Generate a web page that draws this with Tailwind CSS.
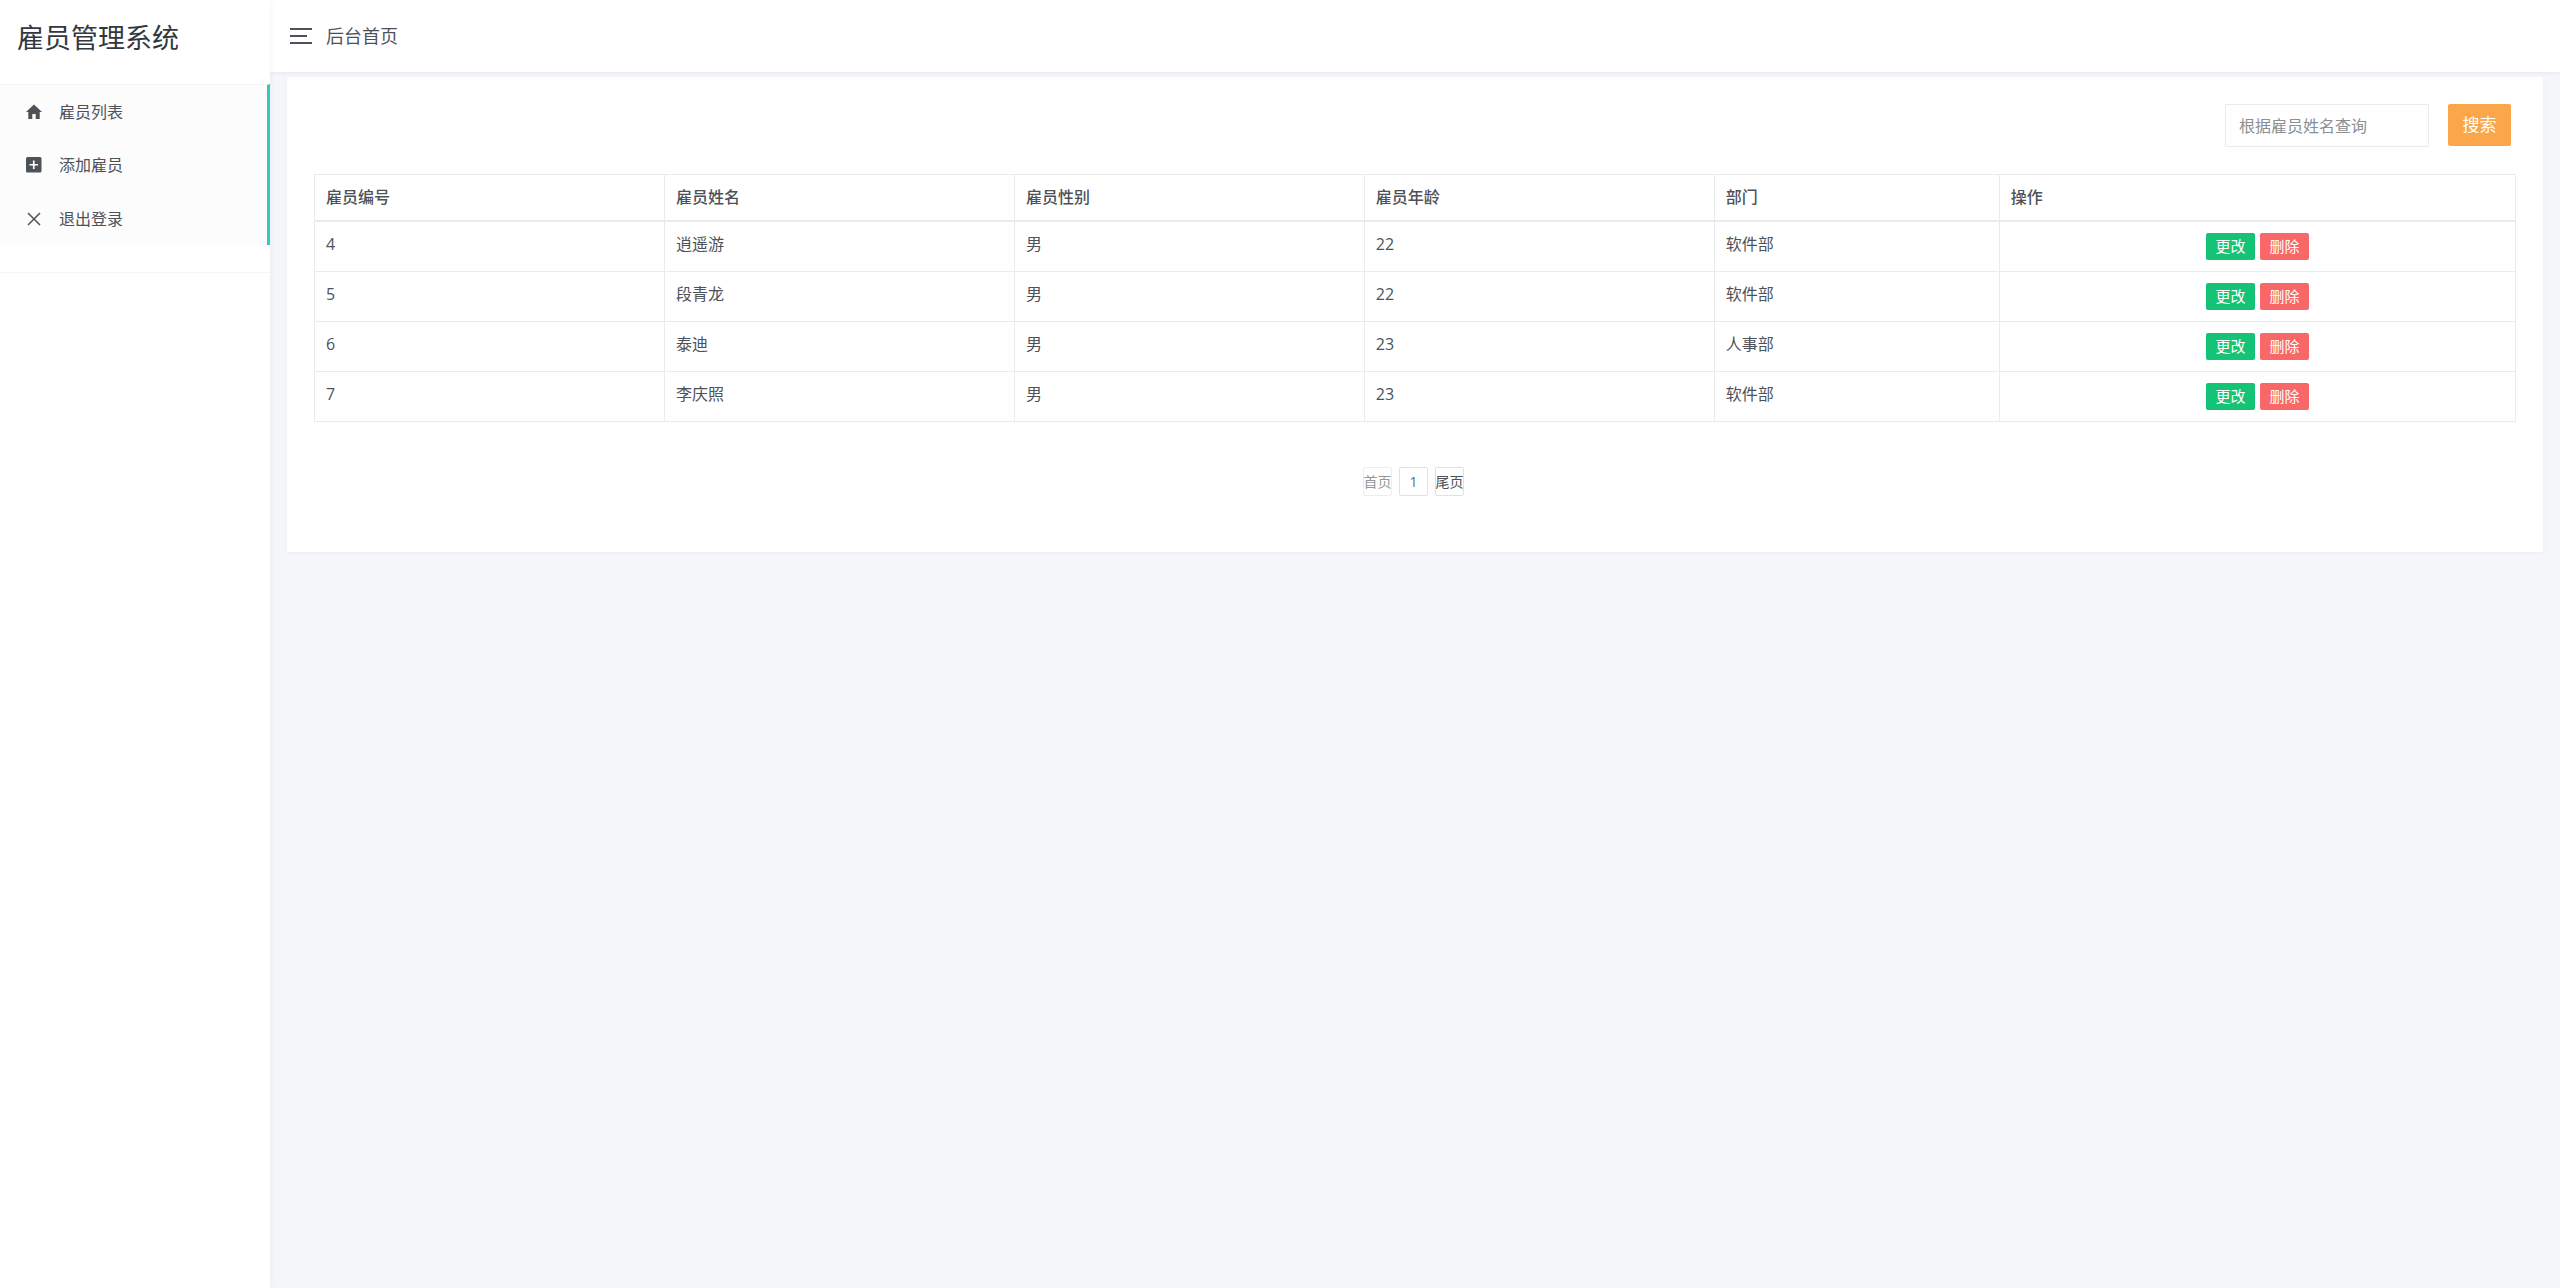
<!DOCTYPE html>
<html lang="zh-CN">
<head>
<meta charset="utf-8">
<title>雇员管理系统</title>
<script src="https://cdn.jsdelivr.net/npm/@tailwindcss/browser@4"></script>
</head>
<body class="flex min-h-screen bg-[#f5f6fa] font-['Open_Sans','Noto_Sans_CJK_SC',sans-serif] text-base font-normal text-[#4d5259]">
  <aside class="relative z-10 w-[270px] shrink-0 bg-white shadow-[0_0_6px_rgba(0,0,0,0.06)]">
    <h1 class="flex h-[84px] items-start px-[17px] pt-[18px] text-[27px] leading-10 font-normal text-[#33383e]">雇员管理系统</h1>
    <nav class="border-b border-[#f5f5f5] pb-[27px]">
      <ul class="border-t border-r-3 border-t-[#f5f5f5] border-r-[#33cabb] bg-[#fcfcfc] leading-[22px]">
        <li><a href="#" class="flex h-[53px] items-center gap-4 px-[25px]">
          <svg class="size-[18px]" viewBox="0 0 18 18" fill="currentColor" aria-hidden="true"><path d="M9 1.500 1 9h2.300v7H7.300v-5h3.400v5h4V9H17z"/></svg>
          雇员列表</a></li>
        <li><a href="#" class="flex h-[54px] items-center gap-4 px-[25px]">
          <svg class="size-[18px]" viewBox="0 0 18 18" aria-hidden="true"><rect x="1" y="1" width="15.500" height="15.500" rx="1.500" fill="currentColor"/><path d="M8.750 4.500v8.500M4.500 8.750H13" stroke="#fff" stroke-width="1.700"/></svg>
          添加雇员</a></li>
        <li><a href="#" class="flex h-[53px] items-center gap-4 px-[25px]">
          <svg class="size-[18px]" viewBox="0 0 18 18" fill="none" stroke="currentColor" stroke-width="1.500" aria-hidden="true"><path d="m3 3 12 12M15 3 3 15"/></svg>
          退出登录</a></li>
      </ul>
    </nav>
  </aside>

  <div class="min-w-0 flex-1">
    <header class="flex h-[72px] items-center gap-[14px] bg-white px-5 shadow-[0_1px_4px_rgba(0,0,0,0.06)]">
      <button type="button" aria-label="菜单" class="flex w-[22px] flex-col gap-[5px]">
        <span class="h-[2px] w-[22px] bg-[#4d5259]"></span>
        <span class="h-[2px] w-[17px] bg-[#4d5259]"></span>
        <span class="h-[2px] w-[22px] bg-[#4d5259]"></span>
      </button>
      <span class="text-lg">后台首页</span>
    </header>

    <main class="px-[17px] pt-[5px]">
      <section class="bg-white px-[27px] pt-[27px] pb-14 shadow-[0_1px_4px_rgba(0,0,0,0.04)]">
        <form class="flex justify-end gap-[19px] pr-[5px]">
          <input type="text" aria-label="根据雇员姓名查询" placeholder="根据雇员姓名查询" class="h-[43px] w-[204px] border border-[#ebebeb] px-[13px] placeholder:text-[#8b8f94]">
          <button type="button" class="h-[42px] w-[63px] rounded-[2px] bg-[#faa64b] text-[17px] text-white">搜索</button>
        </form>

        <table class="mt-[27px] w-full table-fixed border-collapse border border-[#ebebeb] text-left leading-6">
          <colgroup><col class="w-[15.9%]"><col class="w-[15.9%]"><col class="w-[15.9%]"><col class="w-[15.9%]"><col class="w-[12.95%]"><col></colgroup>
          <thead>
            <tr class="border-b-2 border-[#ebebeb] *:border-r *:border-[#ebebeb] *:px-[11px] *:pt-[10px] *:pb-[11px] *:font-medium">
              <th>雇员编号</th><th>雇员姓名</th><th>雇员性别</th><th>雇员年龄</th><th>部门</th><th>操作</th>
            </tr>
          </thead>
          <tbody class="*:border-b *:border-[#ebebeb] [&_td]:border-r [&_td]:border-[#ebebeb] [&_td]:px-[11px] [&_td]:py-[11px] [&_td]:align-top [&_td]:leading-[22px] [&_td>div]:flex [&_td>div]:justify-center [&_td>div]:gap-[5px] [&_button]:h-[27px] [&_button]:w-[49px] [&_button]:rounded-[2px] [&_button]:pb-[2px] [&_button]:text-[15px] [&_button]:leading-6 [&_button]:text-white">
            <tr><td>4</td><td>逍遥游</td><td>男</td><td>22</td><td>软件部</td><td><div><button type="button" class="bg-[#15c377]">更改</button><button type="button" class="bg-[#f96868]">删除</button></div></td></tr>
            <tr><td>5</td><td>段青龙</td><td>男</td><td>22</td><td>软件部</td><td><div><button type="button" class="bg-[#15c377]">更改</button><button type="button" class="bg-[#f96868]">删除</button></div></td></tr>
            <tr><td>6</td><td>泰迪</td><td>男</td><td>23</td><td>人事部</td><td><div><button type="button" class="bg-[#15c377]">更改</button><button type="button" class="bg-[#f96868]">删除</button></div></td></tr>
            <tr><td>7</td><td>李庆照</td><td>男</td><td>23</td><td>软件部</td><td><div><button type="button" class="bg-[#15c377]">更改</button><button type="button" class="bg-[#f96868]">删除</button></div></td></tr>
          </tbody>
        </table>

        <nav aria-label="分页" class="mt-[45px] flex justify-center gap-[7px] pr-[3px] text-sm *:flex *:size-[29px] *:items-center *:justify-center *:rounded-[2px] *:border *:border-[#dfe2e5] *:whitespace-nowrap">
          <a href="#" class="opacity-60">首页</a>
          <a href="#" class="text-[#4d7496]">1</a>
          <a href="#">尾页</a>
        </nav>
      </section>
    </main>
  </div>
</body>
</html>
